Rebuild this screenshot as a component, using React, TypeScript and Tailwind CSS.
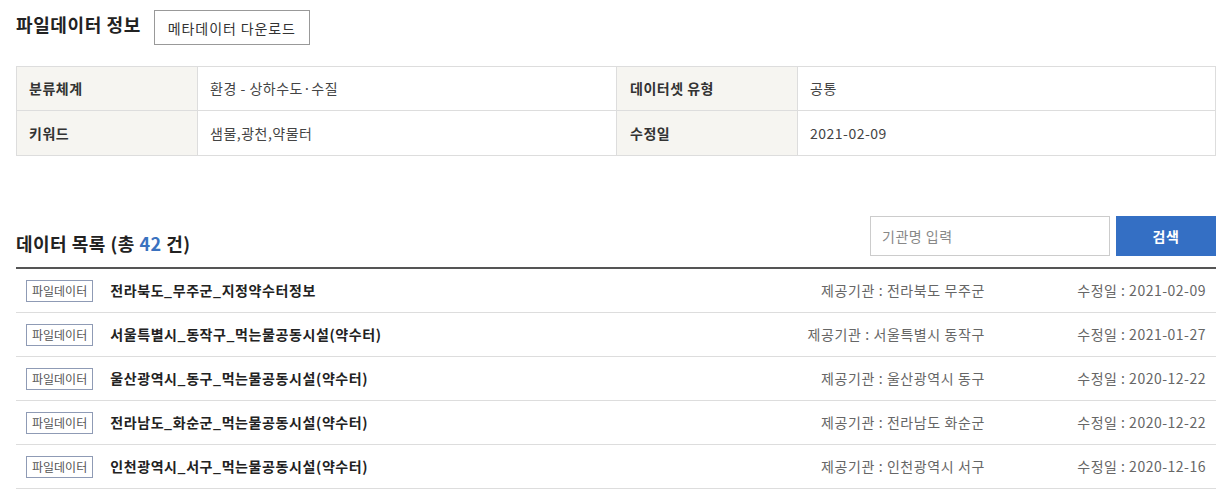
import React from 'react';

const rows = [
  { title: '전라북도_무주군_지정약수터정보', org: '전라북도 무주군', date: '2021-02-09' },
  { title: '서울특별시_동작구_먹는물공동시설(약수터)', org: '서울특별시 동작구', date: '2021-01-27' },
  { title: '울산광역시_동구_먹는물공동시설(약수터)', org: '울산광역시 동구', date: '2020-12-22' },
  { title: '전라남도_화순군_먹는물공동시설(약수터)', org: '전라남도 화순군', date: '2020-12-22' },
  { title: '인천광역시_서구_먹는물공동시설(약수터)', org: '인천광역시 서구', date: '2020-12-16' },
];

const font = { fontFamily: '"Noto Sans CJK KR", "Noto Sans", sans-serif' };

export default function App() {
  return (
    <div className="w-[1226px] h-[501px] bg-white overflow-hidden pl-4 pr-[10px] text-[#333]" style={font}>
      {/* 파일데이터 정보 */}
      <div className="flex items-start h-[45px]">
        <h2 className="mt-[13px] text-[18px] font-bold leading-[22px] text-[#222] tracking-[0.6px]">파일데이터 정보</h2>
        <button className="ml-[13px] mt-[10px] h-[35px] px-[13px] border border-[#999] text-[14px] leading-none text-[#333] tracking-[0.9px]">
          메타데이터 다운로드
        </button>
      </div>

      <div className="mt-[21px] border border-[#ddd] text-[14px] tracking-[0.5px]">
        <div className="flex h-[44px] border-b border-[#ddd]">
          <div className="w-[181px] bg-[#f6f5f1] border-r border-[#ddd] flex items-center pl-[12px] font-semibold text-[#333]">분류체계</div>
          <div className="w-[418px] flex items-center pl-[12px] text-[#444]">환경 - 상하수도·수질</div>
          <div className="w-[182px] bg-[#f6f5f1] border-x border-[#ddd] flex items-center pl-[13px] font-semibold text-[#333]">데이터셋 유형</div>
          <div className="flex-1 flex items-center pl-[12px] text-[#444]">공통</div>
        </div>
        <div className="flex h-[44px]">
          <div className="w-[181px] bg-[#f6f5f1] border-r border-[#ddd] flex items-center pl-[12px] font-semibold text-[#333]">키워드</div>
          <div className="w-[418px] flex items-center pl-[12px] text-[#444]">샘물,광천,약물터</div>
          <div className="w-[182px] bg-[#f6f5f1] border-x border-[#ddd] flex items-center pl-[13px] font-semibold text-[#333]">수정일</div>
          <div className="flex-1 flex items-center pl-[12px] text-[#444]">2021-02-09</div>
        </div>
      </div>

      {/* 데이터 목록 */}
      <div className="mt-[60px] flex items-end justify-between pb-[11px]">
        <h2 className="text-[18px] font-bold leading-none text-[#222] tracking-[0.5px] mb-[4px]">
          데이터 목록 (총 <span className="text-[#3a72bf]">42</span> 건)
        </h2>
        <div className="flex gap-[6px]">
          <input
            className="w-[240px] h-[40px] border border-[#ccc] px-[11px] text-[14px] tracking-[0.5px] placeholder:text-[#888] outline-none"
            placeholder="기관명 입력"
          />
          <button className="w-[100px] h-[40px] bg-[#346fc4] text-white text-[14px] font-bold tracking-[0.5px]">검색</button>
        </div>
      </div>

      <ul className="border-t-2 border-[#555]">
        {rows.map((r) => (
          <li key={r.title} className="flex items-center h-[44px] border-b border-[#ddd] text-[14px]">
            <span className="ml-[10px] h-[22px] px-[5px] border border-[#8f9bb5] text-[12px] leading-[20px] text-[#555] tracking-[0px]">
              파일데이터
            </span>
            <span className="ml-[17px] font-bold text-[#222] tracking-[0.6px] flex-1">{r.title}</span>
            <span className="text-[#666] text-right tracking-[0.6px]">제공기관 : {r.org}</span>
            <span className="w-[231px] pr-[10px] text-right text-[#666] tracking-[0.5px]">수정일 : {r.date}</span>
          </li>
        ))}
      </ul>
    </div>
  );
}
